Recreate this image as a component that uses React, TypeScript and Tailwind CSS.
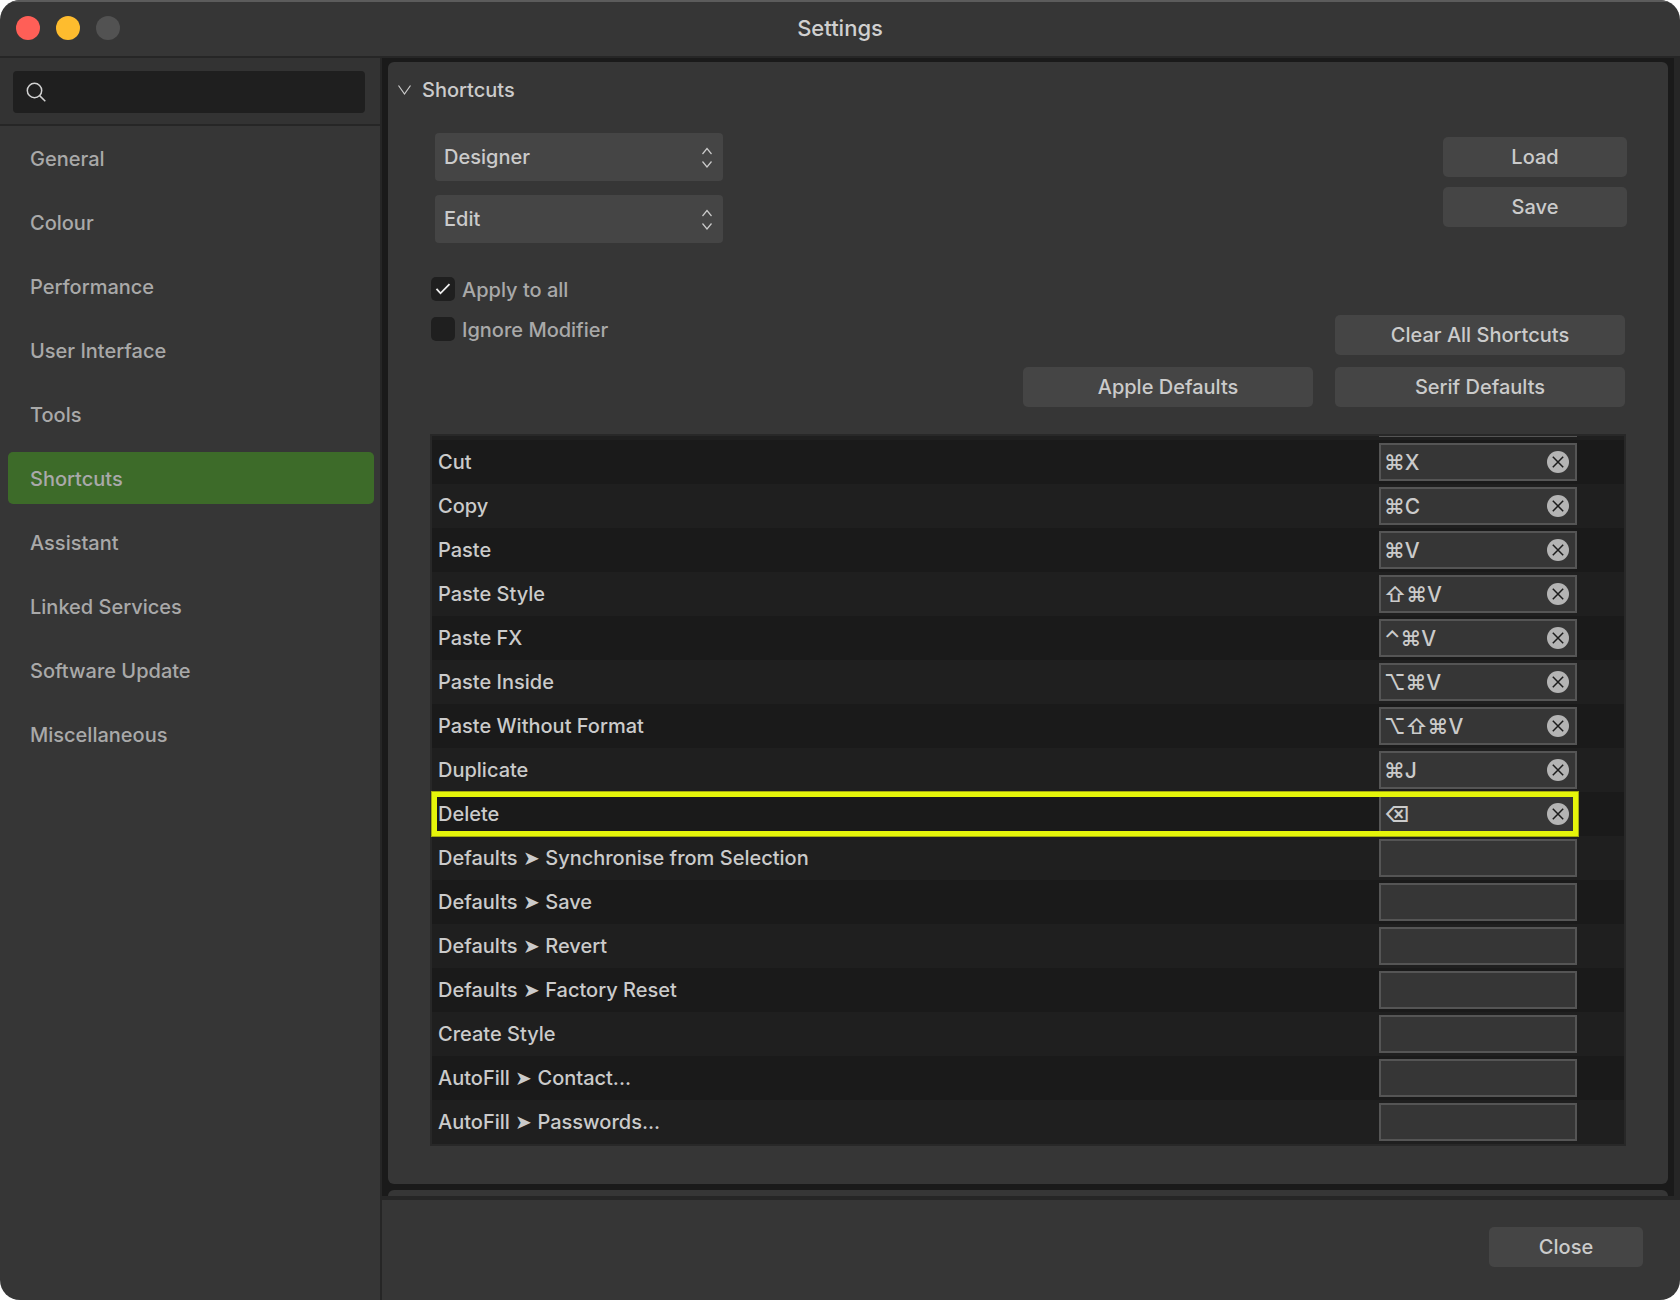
import { useState } from "react"
import clsx from "clsx"

const sections = [
	"General",
	"Colour",
	"Performance",
	"User Interface",
	"Tools",
	"Shortcuts",
	"Assistant",
	"Linked Services",
	"Software Update",
	"Miscellaneous",
]

const initialShortcuts = [
	{ name: "Cut", keys: "⌘X" },
	{ name: "Copy", keys: "⌘C" },
	{ name: "Paste", keys: "⌘V" },
	{ name: "Paste Style", keys: "⇧⌘V" },
	{ name: "Paste FX", keys: "⌃⌘V" },
	{ name: "Paste Inside", keys: "⌥⌘V" },
	{ name: "Paste Without Format", keys: "⌥⇧⌘V" },
	{ name: "Duplicate", keys: "⌘J" },
	{ name: "Delete", keys: "⌫", highlighted: true },
	{ name: "Defaults ➤ Synchronise from Selection", keys: "" },
	{ name: "Defaults ➤ Save", keys: "" },
	{ name: "Defaults ➤ Revert", keys: "" },
	{ name: "Defaults ➤ Factory Reset", keys: "" },
	{ name: "Create Style", keys: "" },
	{ name: "AutoFill ➤ Contact...", keys: "" },
	{ name: "AutoFill ➤ Passwords...", keys: "" },
]

function Button({
	children,
	className,
}: {
	children: string
	className?: string
}) {
	return (
		<button
			type="button"
			className={clsx("h-10 rounded-[5px] bg-[#454545] text-[#cbcbcb]", className)}
		>
			{children}
		</button>
	)
}

function Select({ label, options }: { label: string; options: string[] }) {
	return (
		<div className="relative">
			<select
				aria-label={label}
				className="block h-12 w-full appearance-none rounded bg-[#454545] px-[9px] pb-px text-[#cbcbcb] outline-none"
			>
				{options.map((option) => (
					<option key={option}>{option}</option>
				))}
			</select>
			<svg
				className="pointer-events-none absolute top-3.5 right-2.5 h-6 w-3"
				viewBox="0 0 12 24"
				fill="none"
				stroke="#cbcbcb"
				strokeWidth="1.2"
			>
				<path d="M1.5 7 6 1.500 10.500 7M1.500 14.500 6 20 10.500 14.500" />
			</svg>
		</div>
	)
}

function Checkbox({
	label,
	defaultChecked,
}: {
	label: string
	defaultChecked?: boolean
}) {
	return (
		<label className="flex h-6 gap-[7px] text-[#a9a9a9]">
			<span className="relative size-6">
				<input
					type="checkbox"
					defaultChecked={defaultChecked}
					className="peer block size-6 appearance-none rounded-[5px] bg-[#1f1f1f]"
				/>
				<svg
					className="pointer-events-none invisible absolute inset-0 size-6 peer-checked:visible"
					viewBox="0 0 24 24"
					fill="none"
					stroke="#f0f0f0"
					strokeWidth="1.8"
				>
					<path d="M5.500 11.800 9.500 16.300 18.500 7.200" />
				</svg>
			</span>
			<span className="pt-px">{label}</span>
		</label>
	)
}

function ShortcutField({
	name,
	keys,
	onClear,
}: {
	name: string
	keys: string
	onClear: () => void
}) {
	return (
		<div className="relative flex w-[198px]">
			<input
				type="text"
				aria-label={name}
				value={keys}
				readOnly
				className="h-[38px] w-full border-2 border-[#555] bg-[#363636] px-[3px] text-[21px] text-[#cbcbcb] outline-none"
			/>
			{keys && (
				<button
					type="button"
					aria-label={`Clear ${name}`}
					onClick={onClear}
					className="absolute top-2 right-2 size-[22px]"
				>
					<svg viewBox="0 0 22 22" className="size-full">
						<circle cx="11" cy="11" r="11" fill="#b4b4b4" />
						<path
							d="M5.800 5.800 16.200 16.200M16.200 5.800 5.800 16.200"
							stroke="#1c1c1c"
							strokeWidth="1.5"
						/>
					</svg>
				</button>
			)}
		</div>
	)
}

function Sidebar() {
	const [active, setActive] = useState("Shortcuts")

	return (
		<aside className="w-[382px] shrink-0 border-r-2 border-[#262626]">
			<div className="border-b-2 border-[#262626] bg-[#333] pt-[13px] pr-[15px] pb-[11px] pl-[13px]">
				<label className="flex h-[42px] items-center rounded bg-[#1f1f1f] px-3">
					<svg
						className="size-6 shrink-0"
						viewBox="0 0 24 24"
						fill="none"
						stroke="#d2d2d2"
						strokeWidth="1.5"
					>
						<circle cx="9.500" cy="10.500" r="7.200" />
						<path d="M14.600 15.600 20.300 21.300" />
					</svg>
					<input
						type="text"
						aria-label="Search settings"
						className="w-full bg-transparent pl-2 text-[#cbcbcb] outline-none"
					/>
				</label>
			</div>
			<nav className="flex flex-col gap-3 py-1.5 pr-1.5 pl-2">
				{sections.map((section) => (
					<button
						key={section}
						type="button"
						onClick={() => setActive(section)}
						className={clsx(
							"h-[52px] rounded-[5px] px-[22px] pt-0.5 text-left text-[#a9a9a9]",
							section === active && "bg-[#3d6b29]"
						)}
					>
						{section}
					</button>
				))}
			</nav>
		</aside>
	)
}

function ShortcutTable() {
	const [shortcuts, setShortcuts] = useState(initialShortcuts)

	const clear = (name: string) =>
		setShortcuts(shortcuts.map((s) => (s.name === name ? { ...s, keys: "" } : s)))

	return (
		<div className="border-2 border-[#282828]">
			<table className="w-full border-collapse text-[#cbcbcb]">
				<tbody>
					{/* tail end of the row scrolled out above */}
					<tr className="bg-[#1f1f1f]">
						<td className="p-0" />
						<td className="w-[245px] p-0">
							<div className="h-1 w-[198px]">
								<div className="h-px bg-[#555]" />
							</div>
						</td>
					</tr>
					{shortcuts.map(({ name, keys, highlighted }) => (
						<tr
							key={name}
							className="relative h-11 odd:bg-[#1f1f1f] even:bg-[#1a1a1a]"
						>
							<td className="p-0 pl-1.5">
								{name}
								{highlighted && (
									<span className="pointer-events-none absolute -top-px right-[45px] -bottom-px -left-px z-10 border border-[#a3ab0e]">
										<span className="block h-full border-5 border-[#e5f50a]" />
									</span>
								)}
							</td>
							<td className="w-[245px] p-0">
								<ShortcutField
									name={name}
									keys={keys}
									onClear={() => clear(name)}
								/>
							</td>
						</tr>
					))}
				</tbody>
			</table>
		</div>
	)
}

export default function App() {
	return (
		<div className="bg-white">
			<div className="flex min-h-screen flex-col overflow-hidden rounded-[20px] bg-[#363636] font-['Inter','Liberation_Sans',sans-serif] text-[20px] leading-6 font-medium">
				<header className="flex h-[58px] items-center border-b-2 border-[#262626] px-4 shadow-[inset_0_2px_0_#5c5c5c]">
					<div className="flex flex-1 gap-4">
						<span className="size-6 rounded-full bg-[#ff5f57]" />
						<span className="size-6 rounded-full bg-[#febc2e]" />
						<span className="size-6 rounded-full bg-[#525252]" />
					</div>
					<h1 className="text-[22px] text-[#d0d0d0]">Settings</h1>
					<div className="flex-1" />
				</header>
				<div className="flex flex-1">
					<Sidebar />
					<div className="flex min-w-0 flex-1 flex-col">
						<main className="flex-1 border-r-6 border-[#262626] bg-[#1a1a1a] pt-1 pr-1.5 pl-1.5">
							<section className="rounded-md bg-[#363636] pt-4 pr-[42px] pb-[38px] pl-[42px]">
								<h2 className="-ml-8">
									<button
										type="button"
										className="flex items-center gap-[11px] text-[#cbcbcb]"
									>
										<svg
											className="h-3 w-[13px]"
											viewBox="0 0 13 12"
											fill="none"
											stroke="#cbcbcb"
											strokeWidth="1.2"
										>
											<path d="M0.500 1.500 6.500 10 12.500 1.500" />
										</svg>
										Shortcuts
									</button>
								</h2>
								<div className="mt-[31px] -mr-px flex items-start justify-between">
									<div className="ml-[5px] flex w-72 flex-col gap-3.5">
										<Select
											label="Persona"
											options={["Designer", "Pixel", "Export"]}
										/>
										<Select label="Menu" options={["Edit", "File", "View"]} />
									</div>
									<div className="mt-1 flex w-[184px] flex-col gap-2.5">
										<Button>Load</Button>
										<Button>Save</Button>
									</div>
								</div>
								<div className="mt-[34px] flex items-start justify-between">
									<div className="ml-px flex flex-col gap-4">
										<Checkbox label="Apply to all" defaultChecked />
										<Checkbox label="Ignore Modifier" />
									</div>
									<div className="mt-[38px] mr-px mb-[27px] flex flex-col items-end gap-3">
										<Button className="w-[290px]">Clear All Shortcuts</Button>
										<div className="flex gap-[22px]">
											<Button className="w-[290px]">Apple Defaults</Button>
											<Button className="w-[290px]">Serif Defaults</Button>
										</div>
									</div>
								</div>
								<ShortcutTable />
							</section>
							<div className="mt-1.5 h-1.5 rounded-t-md bg-[#363636]" />
						</main>
						<footer className="flex justify-end border-t-4 border-[#262626] px-[37px] pt-[27px] pb-[33px]">
							<Button className="w-[154px]">Close</Button>
						</footer>
					</div>
				</div>
			</div>
		</div>
	)
}
